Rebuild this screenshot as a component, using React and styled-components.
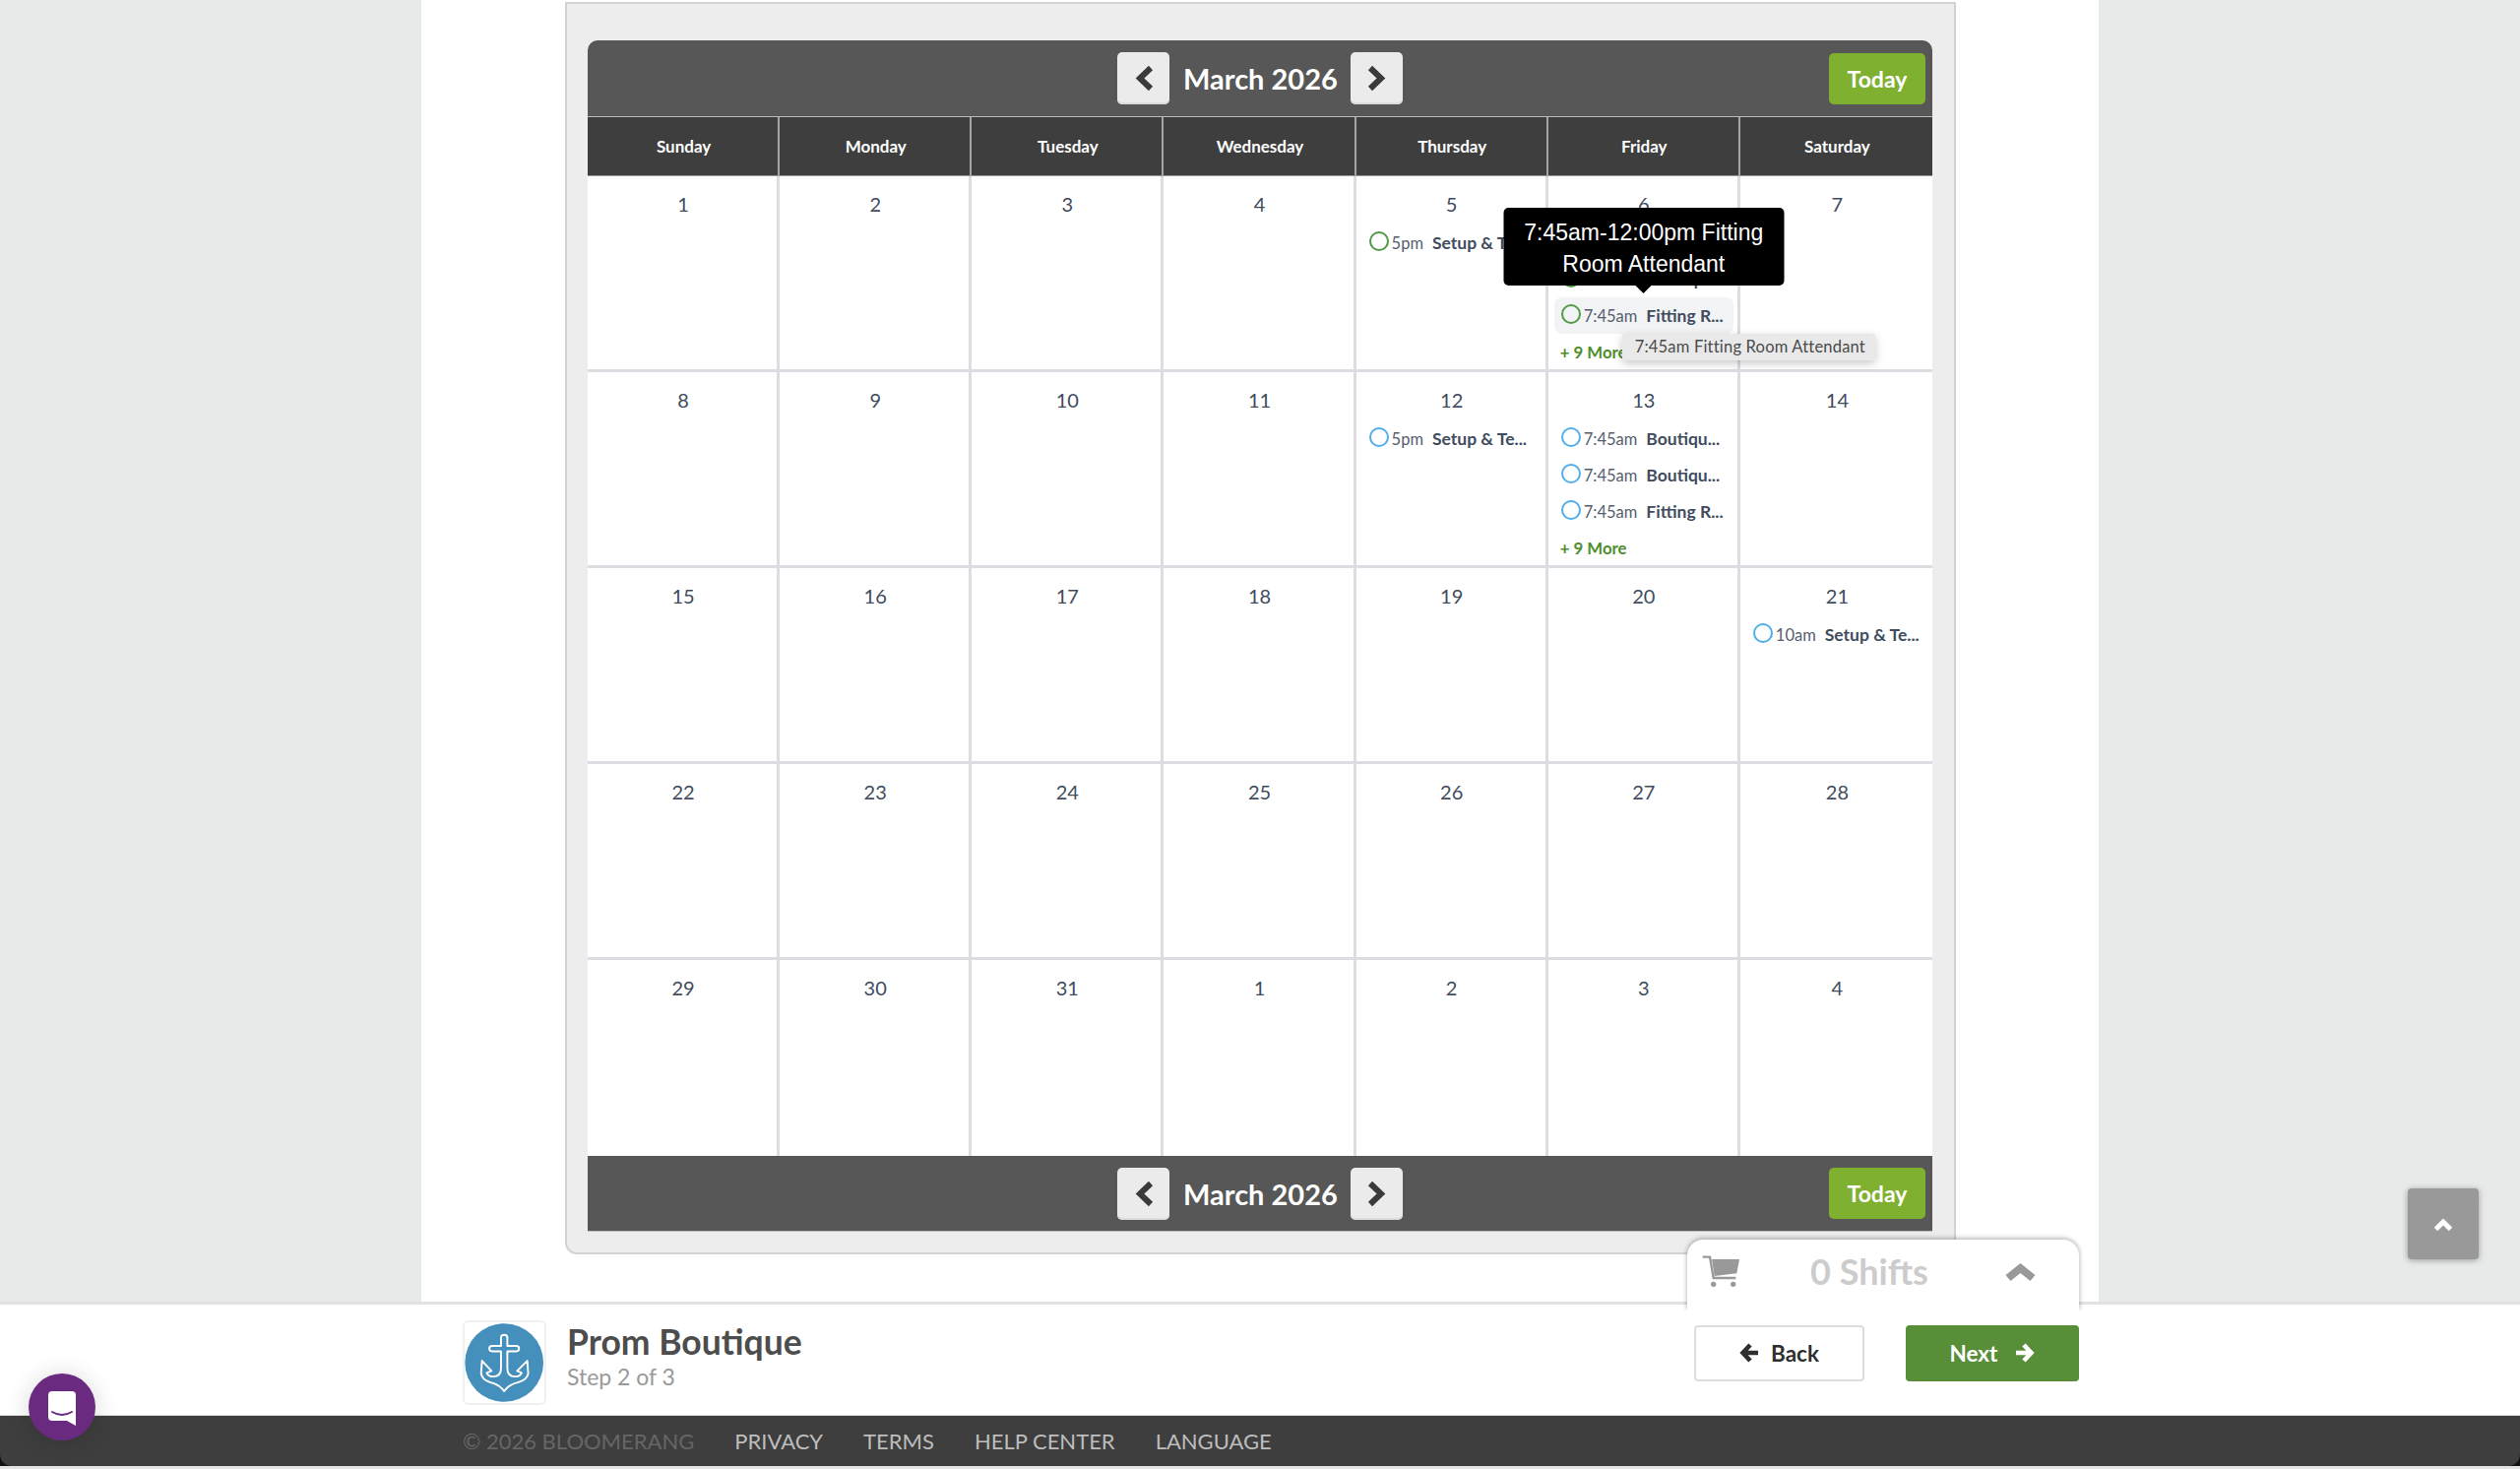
import React from "react";
import styled, { createGlobalStyle } from "styled-components";

const Global = createGlobalStyle`
  html, body { margin: 0; padding: 0; height: 100%; overflow: hidden; }
  body { font-family: Lato, "Noto Sans", sans-serif; background: #e8eaea; }
  * { box-sizing: border-box; }
`;

const Shell = styled.div`
  width: 2560px; height: 1492px; display: flex; flex-direction: column;
  background: #e8eaea; overflow: hidden; position: relative;
`;
const Main = styled.main`
  height: 1322px; flex: none; display: flex; justify-content: center; overflow: hidden;
`;
const Column = styled.div`
  width: 1704px; height: 100%; background: #fff; padding: 2px 145px 0 146px;
`;
const Panel = styled.section`
  background: #ededed; border: 2px solid #d2d2d2; border-radius: 0 0 12px 12px;
  padding: 37px 22px 21px 21px; height: 1272px;
`;
const Bar = styled.div`
  height: ${p => (p.$top ? "78px" : "77px")}; background: #575757; display: grid; grid-template-columns: 1fr auto 1fr; align-items: center;
  padding: 0 7px; border-radius: ${p => (p.$top ? "10px 10px 0 0" : "0")};
  border-bottom: 1px solid #bbb;
`;
const NavGroup = styled.div`
  grid-column: 2; display: flex; align-items: center; gap: 14px;
`;
const NavBtn = styled.button`
  width: 53px; height: 53px; border: none; border-radius: 5px; background: #ebebeb; color: #3a3a3a; padding: 0;
  display: flex; align-items: center; justify-content: center;
  box-shadow: inset 0 -2px 0 #dcdcdc;
`;
const Title = styled.h2`
  margin: 0; width: 156px; text-align: center; font-size: 29px; font-weight: 700; color: #fff; white-space: nowrap; line-height: 1;
`;
const TodayBtn = styled.button`
  justify-self: end; width: 98px; height: 52px; border: none; border-radius: 5px; background: #80b030; color: #fff;
  font: 700 23px Lato, sans-serif; padding: 0;
`;
const Grid = styled.div`
  display: grid; grid-template-columns: repeat(7, 1fr);
`;
const DayHead = styled.div`
  height: 60px; background: #3e3e3e; color: #fff; font-size: 17px; font-weight: 700; display: flex; align-items: center; justify-content: center;
  border-right: 2px solid #a5a5a5; border-bottom: 1px solid #999; padding-left: 2px;
  &:last-child { border-right: none; }
`;
const Cell = styled.div`
  height: 199px; background: #fff; border-right: 3px solid #dcdde2; border-bottom: 3px solid #dcdde2; position: relative;
  &:nth-child(7n) { border-right: none; }
  &:nth-last-child(-n + 7) { border-bottom: none; }
`;
const DayNum = styled.div`
  text-align: center; font-size: 20px; color: #3f4c5e; line-height: 24px; margin-top: 16px; height: 33px; padding-left: 2px;
`;
const EventRow = styled.div`
  position: relative; height: 37px; margin: 0 4px 0 6px; padding-left: 7px; display: flex; align-items: center; border-radius: 8px;
  white-space: nowrap; font-size: 16.5px;
  background: ${p => (p.$hover ? "#f2f3f5" : "transparent")};
`;
const Ring = styled.span`
  width: 20px; height: 20px; flex: none; border-radius: 50%; border: 2px solid ${p => (p.$color === "green" ? "#4f9a45" : "#52aee8")}; margin-top: -3px;
`;
const Time = styled.span`
  color: #55606f; margin-left: 3px;
`;
const EventName = styled.span`
  color: #3f4c5e; font-weight: 700; font-size: 17.5px; margin-left: 9px;
`;
const More = styled.div`
  color: #4f8e2c; font-size: 16.8px; font-weight: 700; padding-left: 12px; line-height: 37px;
`;
const Tip = styled.div`
  position: absolute; left: 50%; bottom: calc(100% + 12px); transform: translateX(-50%); width: 285px; height: 79px; z-index: 5;
  background: #000; color: #fff; border-radius: 5px; font: 23px/32px "Liberation Sans", Arial, sans-serif; text-align: center; white-space: normal; padding: 9px 10px;
  &::after { content: ""; position: absolute; left: 50%; top: 100%; margin-left: -8px; border: 8px solid transparent; border-top-color: #000; border-bottom: none; }
`;
const NativeTip = styled.div`
  position: absolute; left: 69px; top: 100%; width: 257px; height: 27px; z-index: 6; background: #e9e9e9; color: #4a4a4a;
  font-size: 16.5px; line-height: 26px; padding-left: 13px; border-radius: 2px; box-shadow: 0 3px 10px rgba(0,0,0,.22); white-space: nowrap; letter-spacing: .2px;
`;
const BottomBar = styled.div`
  height: 115px; flex: none; background: #fff; border-top: 3px solid #e2e2e2; display: flex; justify-content: center; padding-left: 22px;
`;
const BottomInner = styled.div`
  width: 1642px; position: relative; display: flex; align-items: center; justify-content: space-between;
`;
const Brand = styled.div`
  display: flex; align-items: center; gap: 21px; margin-top: 6px;
`;
const LogoBox = styled.div`
  width: 85px; height: 86px; border: 2px solid #f0f0f0; border-radius: 6px; display: flex; align-items: center; justify-content: center;
`;
const BrandText = styled.div`
  margin-top: -13px;
`;
const BrandName = styled.h1`
  margin: 0; font-size: 35.5px; font-weight: 700; color: #4d4d4d; line-height: 40px;
`;
const BrandStep = styled.div`
  font-size: 23px; color: #999; line-height: 30px;
`;
const Actions = styled.div`
  display: flex; gap: 42px; margin-top: -14px;
`;
const ActionBtn = styled.button`
  height: 57px; width: ${p => (p.$primary ? "176px" : "173px")}; border-radius: 4px; font: 700 22.5px Lato, sans-serif; padding: 0;
  display: flex; align-items: center; justify-content: center; gap: ${p => (p.$primary ? "18px" : "12px")};
  background: ${p => (p.$primary ? "#578e37" : "#fff")}; color: ${p => (p.$primary ? "#fff" : "#2f2f2f")};
  border: ${p => (p.$primary ? "none" : "2px solid #ddd")};
`;
const CartTab = styled.div`
  position: absolute; right: 0; top: -66px; width: 398px; height: 72px; background: #fff; border-radius: 16px 16px 0 0;
  box-shadow: 0 -1px 5px rgba(0,0,0,.35); display: flex; align-items: center; padding: 0 43px 8px 14px; color: #999; z-index: 3;
  clip-path: inset(-8px -8px 0 -8px);
`;
const CartLabel = styled.div`
  flex: 1; text-align: center; font-size: 36px; font-weight: 700; color: #ccc; padding-right: 6px;
`;
const Foot = styled.footer`
  flex: none; height: 55px; background: #e4e4e4; position: relative;
`;
const FootCorner = styled.div`
  height: 52px; background: #111;
`;
const FootInner = styled.div`
  height: 52px; background: #3e3e3e; border-radius: 0 0 12px 12px; border-top: 1px solid #ddd; padding-left: 470px; display: flex; align-items: center; gap: 41px;
  font-size: 22px; color: #bdbdbd;
`;
const Copy = styled.span`
  color: #666;
`;
const ScrollTop = styled.button`
  position: absolute; left: 2446px; top: 1207px; width: 72px; height: 72px; border: none; border-radius: 4px; background: #999; color: #fff;
  box-shadow: 0 1px 6px rgba(0,0,0,.35); display: flex; align-items: center; justify-content: center; padding: 0;
`;
const Chat = styled.button`
  position: absolute; left: 29px; top: 1395px; width: 68px; height: 68px; border: none; border-radius: 50%; background: #6a2a7f;
  box-shadow: 0 2px 24px rgba(0,0,0,.16); display: flex; align-items: center; justify-content: center; padding: 4px 0 0;
`;

const days = ["Sunday", "Monday", "Tuesday", "Wednesday", "Thursday", "Friday", "Saturday"];
const weeks = [
  [1, 2, 3, 4, 5, 6, 7],
  [8, 9, 10, 11, 12, 13, 14],
  [15, 16, 17, 18, 19, 20, 21],
  [22, 23, 24, 25, 26, 27, 28],
  [29, 30, 31, 1, 2, 3, 4],
];
const eventMap = {
  "0-4": { c: "green", items: [["5pm", "Setup & Te..."]] },
  "0-5": { c: "green", more: true, items: [["7:45am", "Boutiqu..."], ["7:45am", "Boutiqu..."], ["7:45am", "Fitting R...", true]] },
  "1-4": { c: "blue", items: [["5pm", "Setup & Te..."]] },
  "1-5": { c: "blue", more: true, items: [["7:45am", "Boutiqu..."], ["7:45am", "Boutiqu..."], ["7:45am", "Fitting R..."]] },
  "2-6": { c: "blue", items: [["10am", "Setup & Te..."]] },
};

const Chevron = ({ dir, w, h, sw }) => {
  const d = {
    left: `M${w - sw / 2} ${sw / 2} L${sw} ${h / 2} L${w - sw / 2} ${h - sw / 2}`,
    right: `M${sw / 2} ${sw / 2} L${w - sw} ${h / 2} L${sw / 2} ${h - sw / 2}`,
    up: `M${sw / 2} ${h - sw / 2} L${w / 2} ${sw} L${w - sw / 2} ${h - sw / 2}`,
  }[dir];
  return (
    <svg width={w} height={h} viewBox={`0 0 ${w} ${h}`}>
      <path d={d} fill="none" stroke="currentColor" strokeWidth={sw} />
    </svg>
  );
};

const Arrow = ({ right }) => (
  <svg width="20" height="20" viewBox="0 0 20 20" style={right ? { transform: "scaleX(-1)" } : undefined}>
    <path d="M11 2 L3.5 10 L11 18 M5 10 H19" fill="none" stroke="currentColor" strokeWidth="4.6" />
  </svg>
);

const Cart = () => (
  <svg width="40" height="34" viewBox="80 80 120 102">
    <path d="M85 88 H107 L118 152 H186" fill="none" stroke="currentColor" strokeWidth="7" />
    <path d="M113 95 H197 L189 138 L121 146Z" fill="currentColor" />
    <circle cx="118" cy="171" r="8" fill="currentColor" />
    <circle cx="178" cy="171" r="8" fill="currentColor" />
  </svg>
);

const CalBar = ({ top }) => (
  <Bar $top={top}>
    <NavGroup>
      <NavBtn aria-label="Previous"><Chevron dir="left" w={20} h={27} sw={6} /></NavBtn>
      <Title>March 2026</Title>
      <NavBtn aria-label="Next"><Chevron dir="right" w={20} h={27} sw={6} /></NavBtn>
    </NavGroup>
    <TodayBtn>Today</TodayBtn>
  </Bar>
);

const Anchor = () => (
  <svg width="84" height="84" viewBox="30 20 252 252">
    <circle cx="155" cy="146" r="124" fill="#458fbd" />
    <path
      d="M145 93 V66 Q145 58 155 58 Q165 58 165 66 V93 H193 Q202 93 202 101 Q202 110 193 110 H165 V165 Q165 190 190 190 Q205 190 210 178 L196 172 L228 140 L231 180 Q228 200 200 208 Q170 215 155 236 Q140 215 110 208 Q85 200 82 180 L85 140 L115 172 L100 178 Q105 190 120 190 Q145 190 145 165 V110 H117 Q108 110 108 101 Q108 93 117 93 Z"
      fill="none" stroke="#fff" strokeWidth="6" strokeLinejoin="round"
    />
  </svg>
);

const ChatIcon = () => (
  <svg width="28" height="36" viewBox="0 0 28 36">
    <path d="M4 0 H24 Q28 0 28 4 V35 L19 30 H4 Q0 30 0 26 V4 Q0 0 4 0Z" fill="#fff" />
    <path d="M4 21 Q14 27 24 21" fill="none" stroke="#6a2a7f" strokeWidth="2" strokeLinecap="round" />
  </svg>
);

export default function App() {
  return (
    <Shell>
      <Global />
      <Main>
        <Column>
          <Panel>
            <CalBar top />
            <Grid>
              {days.map(d => <DayHead key={d}>{d}</DayHead>)}
            </Grid>
            <Grid>
              {weeks.flatMap((w, wi) => w.map((n, di) => {
                const ev = eventMap[`${wi}-${di}`];
                return (
                  <Cell key={`${wi}-${di}`}>
                    <DayNum>{n}</DayNum>
                    {ev && ev.items.map(([t, name, hover], i) => (
                      <EventRow key={i} $hover={hover}>
                        <Ring $color={ev.c} />
                        <Time>{t}</Time>
                        <EventName>{name}</EventName>
                        {hover && <Tip>7:45am-12:00pm Fitting Room Attendant</Tip>}
                        {hover && <NativeTip>7:45am Fitting Room Attendant</NativeTip>}
                      </EventRow>
                    ))}
                    {ev && ev.more && <More>+ 9 More</More>}
                  </Cell>
                );
              }))}
            </Grid>
            <CalBar />
          </Panel>
        </Column>
      </Main>
      <BottomBar>
        <BottomInner>
          <Brand>
            <LogoBox><Anchor /></LogoBox>
            <BrandText>
              <BrandName>Prom Boutique</BrandName>
              <BrandStep>Step 2 of 3</BrandStep>
            </BrandText>
          </Brand>
          <Actions>
            <ActionBtn><Arrow />Back</ActionBtn>
            <ActionBtn $primary>Next<Arrow right /></ActionBtn>
          </Actions>
          <CartTab>
            <Cart />
            <CartLabel>0 Shifts</CartLabel>
            <Chevron dir="up" w={33} h={22} sw={8} />
          </CartTab>
        </BottomInner>
      </BottomBar>
      <Foot>
        <FootCorner>
          <FootInner>
            <Copy>© 2026 BLOOMERANG</Copy>
            <span>PRIVACY</span>
            <span>TERMS</span>
            <span>HELP CENTER</span>
            <span>LANGUAGE</span>
          </FootInner>
        </FootCorner>
      </Foot>
      <ScrollTop aria-label="Top"><Chevron dir="up" w={20} h={15} sw={5} /></ScrollTop>
      <Chat aria-label="Chat"><ChatIcon /></Chat>
    </Shell>
  );
}
